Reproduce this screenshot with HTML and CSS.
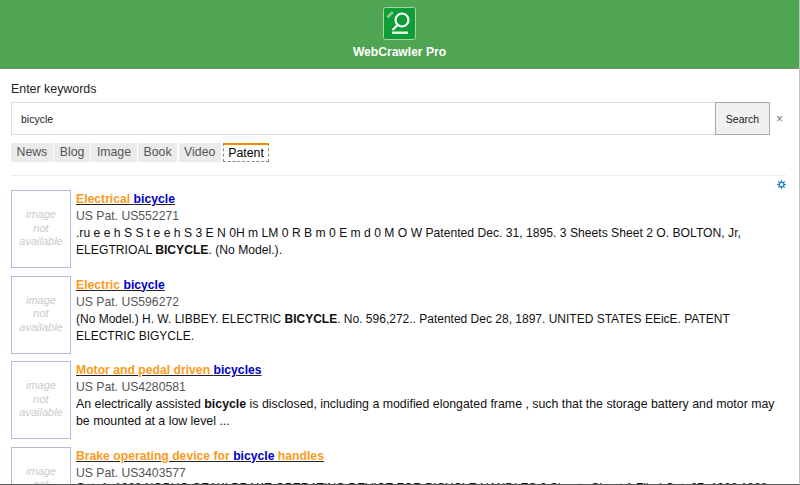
FILE: index.html
```html
<!DOCTYPE html>
<html lang="en">
<head>
<meta charset="utf-8">
<title>WebCrawler Pro</title>
<link rel="stylesheet" href="styles.css">
</head>
<body>
<div class="frame">
  <header class="header">
    <svg class="logo" width="33" height="33" viewBox="0 0 33 33" aria-hidden="true">
      <rect x="0.5" y="0.5" width="32" height="32" rx="2" fill="#0f9d38" stroke="#a9d3ab"/>
      <circle cx="19" cy="13" r="6.5" fill="none" stroke="#fff" stroke-width="2.2"/>
      <path d="M14.5 18 L9.5 23" stroke="#fff" stroke-width="2.2"/>
      <rect x="9" y="24.5" width="16" height="2.4" fill="#e8f5ea"/>
      <path d="M4.5 10 L10 5" stroke="#bfe3c6" stroke-width="2.6" stroke-dasharray="1.2 .6"/>
    </svg>
    <div class="app-name">WebCrawler Pro</div>
  </header>
  <main class="content">
    <label class="label">Enter keywords</label>
    <div class="search">
      <div class="input">bicycle</div>
      <div class="button">Search</div>
      <div class="clear">×</div>
    </div>
    <nav class="tabs">
      <span class="tab">News</span>
      <span class="tab">Blog</span>
      <span class="tab">Image</span>
      <span class="tab">Book</span>
      <span class="tab">Video</span>
      <span class="tab active">Patent</span>
    </nav>
    <div class="rule"></div>
    <div class="settings">
      <svg width="9" height="9" viewBox="0 0 9 9" aria-hidden="true">
        <circle cx="4.5" cy="4.5" r="2.4" fill="none" stroke="#1f7fc0" stroke-width="1.4"/>
        <path d="M4.5 0V2M4.5 7V9M0 4.5H2M7 4.5H9M1.3 1.3L2.6 2.6M6.4 6.4L7.7 7.7M1.3 7.7L2.6 6.4M6.4 2.6L7.7 1.3" stroke="#1f7fc0" stroke-width="1.1"/>
      </svg>
    </div>
    <section class="results">
      <article class="result">
        <div class="thumb">image<br>not<br>available</div>
        <div class="body">
          <div class="title"><span class="o">Electrical</span><span class="o"> </span><span class="b">bicycle</span></div>
          <div class="source">US Pat. US552271</div>
          <div class="snippet mid">.ru e e h S S t e e h S 3 E N 0H m LM 0 R B m 0 E m d 0 M O W Patented Dec. 31, 1895. 3 Sheets Sheet 2 O. BOLTON, Jr, ELEGTRIOAL <strong>BICYCLE</strong>. (No Model.).</div>
        </div>
      </article>
      <article class="result">
        <div class="thumb">image<br>not<br>available</div>
        <div class="body">
          <div class="title"><span class="o">Electric</span><span class="o"> </span><span class="b">bicycle</span></div>
          <div class="source">US Pat. US596272</div>
          <div class="snippet">(No Model.) H. W. LIBBEY. ELECTRIC <strong>BICYCLE</strong>. No. 596,272.. Patented Dec 28, 1897. UNITED STATES EEicE. PATENT ELECTRIC BIGYCLE.</div>
        </div>
      </article>
      <article class="result">
        <div class="thumb">image<br>not<br>available</div>
        <div class="body">
          <div class="title"><span class="o">Motor and pedal driven </span><span class="b">bicycles</span></div>
          <div class="source">US Pat. US4280581</div>
          <div class="snippet wide">An electrically assisted <strong>bicycle</strong> is disclosed, including a modified elongated frame , such that the storage battery and motor may be mounted at a low level ...</div>
        </div>
      </article>
      <article class="result">
        <div class="thumb">image<br>not<br>available</div>
        <div class="body">
          <div class="title"><span class="o">Brake operating device for </span><span class="b">bicycle</span><span class="o"> handles</span></div>
          <div class="source">US Pat. US3403577</div>
          <div class="snippet tight">Oct. 1, 1968 NOBUO OZAKI BRAKE OPERATING DEVICE FOR BICYCLE HANDLES 2 Sheets-Sheet 1 Filed Oct. 27, 1966 1968</div>
        </div>
      </article>
    </section>
  </main>
</div>
</body>
</html>
```
FILE: styles.css
```css
* { box-sizing: border-box; }
html, body { margin: 0; padding: 0; background: #fff; }
body { font-family: "Liberation Sans", Arial, sans-serif; color: #222; }
.frame {
  width: 800px; height: 485px; overflow: hidden;
  border-right: 1px solid #c4c4c4; border-bottom: 1px solid #555;
}
.header {
  height: 69px; background: #4fa552; border-bottom: 1px solid #6f8f70;
  display: flex; flex-direction: column; align-items: center; padding-top: 7px;
}
.logo { display: block; }
.app-name { margin-top: 5px; color: #fff; font-size: 12.1px; font-weight: bold; line-height: 14px; }
.content { padding: 13px 29px 0 11px; }
.label { display: block; font-size: 12.4px; line-height: 15px; color: #222; }
.search { display: flex; align-items: stretch; margin-top: 5px; height: 33px; position: relative; width: 759px; }
.input {
  width: 704px; border: 1px solid #ddd; border-right: 0; padding: 0 9px;
  font-size: 10.5px; line-height: 32px; color: #222;
}
.button {
  width: 55px; border: 1px solid #aaa; background: #f0f0f0;
  font-size: 10.5px; line-height: 32px; text-align: center; color: #222;
}
.clear { position: absolute; left: 765px; top: 9px; font-size: 12px; line-height: 16px; color: #777; }
.tabs { display: flex; gap: 1.5px; margin-top: 8px; height: 19px; }
.tab {
  background: #ebebeb; color: #555; font-size: 12.3px; line-height: 18px; padding: 0 5.5px;
}
.tab.active {
  background: #fff; color: #000; border: 1px dashed #888; border-top: 2px solid #f08c00;
  line-height: 16px; margin-left: 0.5px; padding: 0 4.5px;
}
.rule { height: 1px; background: #eee; margin-top: 13px; width: 775px; }
.settings { display: flex; justify-content: flex-end; width: 775px; height: 9px; margin-top: 4px; line-height: 0; }
.results { margin-top: 1px; width: 770px; }
.result { display: flex; gap: 5px; height: 85.5px; }
.thumb {
  flex: none; width: 60px; height: 78px; border: 1px solid #b8b8e4;
  color: #cbcbcb; font-style: italic; font-size: 11px; line-height: 13.5px;
  text-align: center; padding-top: 17px;
}
.body { flex: 1; min-width: 0; padding-top: 1px; }
.title { font-size: 12.2px; font-weight: bold; line-height: 17px; text-decoration: underline; }
.o { color: #fb9a1c; }
.b { color: #0000c8; }
.source { font-size: 12.2px; line-height: 17px; color: #555; }
.snippet { font-size: 12px; line-height: 17px; color: #111; }
.snippet.mid { font-size: 12.15px; }
.snippet.wide { font-size: 12.35px; }
.snippet.tight { margin-top: -2px; }
```
